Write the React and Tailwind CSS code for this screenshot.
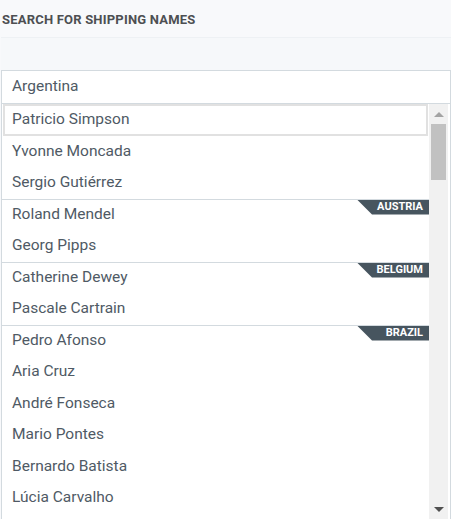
import React from 'react';

const groups = [
  { country: null, names: ['Patricio Simpson', 'Yvonne Moncada', 'Sergio Gutiérrez'] },
  { country: 'Austria', names: ['Roland Mendel', 'Georg Pipps'] },
  { country: 'Belgium', names: ['Catherine Dewey', 'Pascale Cartrain'] },
  { country: 'Brazil', names: ['Pedro Afonso', 'Aria Cruz', 'André Fonseca', 'Mario Pontes', 'Bernardo Batista', 'Lúcia Carvalho'] },
];

const Badge = ({ label }) => (
  <div className="absolute top-0 right-0 h-[15px] w-[72px] bg-[#47555f] text-white text-[11px] font-bold uppercase flex items-center justify-end pr-[6px] [clip-path:polygon(0_0,100%_0,100%_100%,15px_100%)]">
    {label}
  </div>
);

const Row = ({ name, focused, country }) => {
  if (focused) {
    return (
      <div className="h-[31.5px] flex items-center mx-[1px] pl-[7px] border-2 border-[#e1e1e1]">{name}</div>
    );
  }
  return (
    <div className={`relative h-[31.5px] flex items-center pl-[10px] ${country ? 'border-t border-[#d3dadf]' : ''}`}>
      {name}
      {country && <Badge label={country} />}
    </div>
  );
};

const App = () => {
  return (
    <div className="w-[451px] h-[519px] overflow-hidden bg-[#f8f9fb] text-[#4f5a65] font-['Roboto',sans-serif]">
      {/* LABEL */}
      <div className="h-[37px] pt-[10px] pl-[2px] text-[13px] font-bold text-[#4d4f52] tracking-[0.2px]">
        SEARCH FOR SHIPPING NAMES
      </div>

      {/* INPUT */}
      <div className="ml-[1px] h-[33px] bg-[#f6f8fa] border-t border-[#eef1f4]" />

      {/* POPUP */}
      <div className="ml-[1px] bg-white border border-b-0 border-[#d3dadf] text-[15.5px]">
        <div className="h-[33px] flex items-center pl-[10px] border-b border-[#d3dadf]">Argentina</div>

        <div className="flex h-[415px] overflow-hidden">
          <div className="flex-1">
            {groups.map((g, gi) =>
              g.names.map((n, i) => (
                <Row key={n} name={n} focused={gi === 0 && i === 0} country={i === 0 ? g.country : null} />
              ))
            )}
          </div>

          {/* SCROLLBAR */}
          <div className="w-[19px] mr-[2px] bg-[#f1f1f1] flex flex-col items-center">
            <div className="h-[20px] flex items-center justify-center">
              <div className="w-0 h-0 border-l-[5px] border-r-[5px] border-b-[5px] border-l-transparent border-r-transparent border-b-[#a3a3a3]" />
            </div>
            <div className="w-[15px] h-[56px] bg-[#c1c1c1]" />
            <div className="flex-1" />
            <div className="h-[16px] flex items-start justify-center pt-[4px]">
              <div className="w-0 h-0 border-l-[5px] border-r-[5px] border-t-[5px] border-l-transparent border-r-transparent border-t-[#505050]" />
            </div>
          </div>
        </div>
      </div>
    </div>
  );
};

export default App;
